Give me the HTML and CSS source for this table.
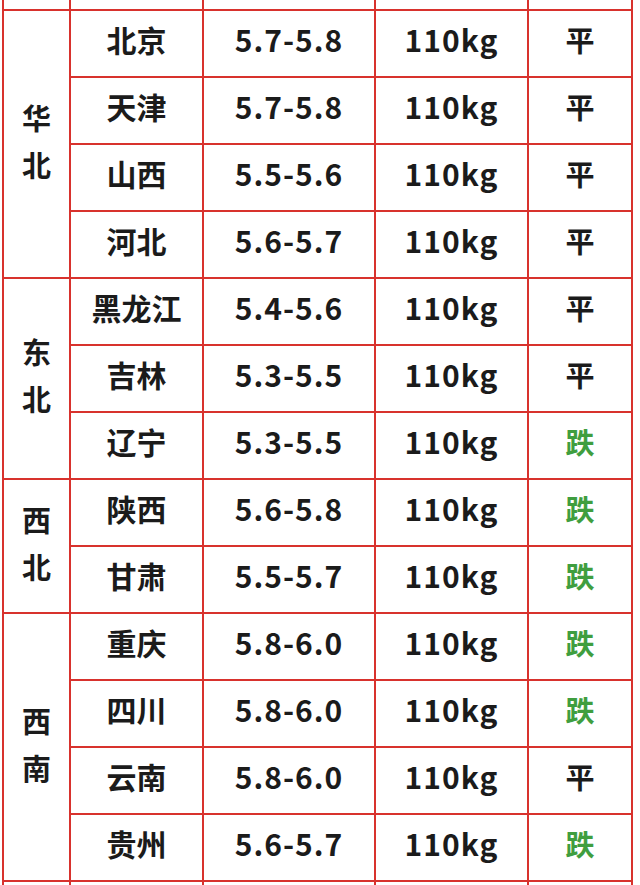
FILE: index.html
```html
<!DOCTYPE html>
<html lang="zh-CN">
<head>
<meta charset="utf-8">
<title>猪价表</title>
<link rel="stylesheet" href="styles.css">
</head>
<body>
<div class="grid">
  <div class="cell"></div><div class="cell"></div><div class="cell"></div><div class="cell"></div><div class="cell"></div>

  <div class="cell region r4">华<br>北</div>
  <div class="cell city">北京</div><div class="cell num">5.7-5.8</div><div class="cell num">110kg</div><div class="cell trend">平</div>
  <div class="cell city">天津</div><div class="cell num">5.7-5.8</div><div class="cell num">110kg</div><div class="cell trend">平</div>
  <div class="cell city">山西</div><div class="cell num">5.5-5.6</div><div class="cell num">110kg</div><div class="cell trend">平</div>
  <div class="cell city">河北</div><div class="cell num">5.6-5.7</div><div class="cell num">110kg</div><div class="cell trend">平</div>

  <div class="cell region r3">东<br>北</div>
  <div class="cell city">黑龙江</div><div class="cell num">5.4-5.6</div><div class="cell num">110kg</div><div class="cell trend">平</div>
  <div class="cell city">吉林</div><div class="cell num">5.3-5.5</div><div class="cell num">110kg</div><div class="cell trend">平</div>
  <div class="cell city">辽宁</div><div class="cell num">5.3-5.5</div><div class="cell num">110kg</div><div class="cell trend down">跌</div>

  <div class="cell region r2">西<br>北</div>
  <div class="cell city">陕西</div><div class="cell num">5.6-5.8</div><div class="cell num">110kg</div><div class="cell trend down">跌</div>
  <div class="cell city">甘肃</div><div class="cell num">5.5-5.7</div><div class="cell num">110kg</div><div class="cell trend down">跌</div>

  <div class="cell region r4">西<br>南</div>
  <div class="cell city">重庆</div><div class="cell num">5.8-6.0</div><div class="cell num">110kg</div><div class="cell trend down">跌</div>
  <div class="cell city">四川</div><div class="cell num">5.8-6.0</div><div class="cell num">110kg</div><div class="cell trend down">跌</div>
  <div class="cell city">云南</div><div class="cell num">5.8-6.0</div><div class="cell num">110kg</div><div class="cell trend">平</div>
  <div class="cell city">贵州</div><div class="cell num">5.6-5.7</div><div class="cell num">110kg</div><div class="cell trend down">跌</div>

  <div class="cell"></div><div class="cell"></div><div class="cell"></div><div class="cell"></div><div class="cell"></div>
</div>
</body>
</html>
```
FILE: styles.css
```css
html, body {
  margin: 0;
  padding: 0;
  background: #ffffff;
  overflow: hidden;
}
body {
  font-family: "Noto Sans CJK SC", "Noto Sans", sans-serif;
  font-weight: 700;
  color: #1b1b1b;
}
.grid {
  margin-left: 2px;
  width: 627px;
  padding: 0 2px;
  background: #d8322d;
  display: grid;
  grid-template-columns: 65px 131px 170px 151px 102px;
  grid-template-rows: 9px repeat(13, 65px) 10px;
  gap: 2px;
}
.cell {
  background: #ffffff;
  display: flex;
  align-items: center;
  justify-content: center;
  font-size: 30px;
  line-height: 1;
  padding-bottom: 9px;
  box-sizing: border-box;
}
.region {
  grid-column: 1;
  text-align: center;
  line-height: 47px;
  font-size: 29px;
  padding-bottom: 7px;
}
.r4 { grid-row: span 4; }
.r3 { grid-row: span 3; }
.r2 { grid-row: span 2; }
.num {
  letter-spacing: 1px;
}
.trend { font-size: 29px; }
.down { color: #3f9e3f; }
```
